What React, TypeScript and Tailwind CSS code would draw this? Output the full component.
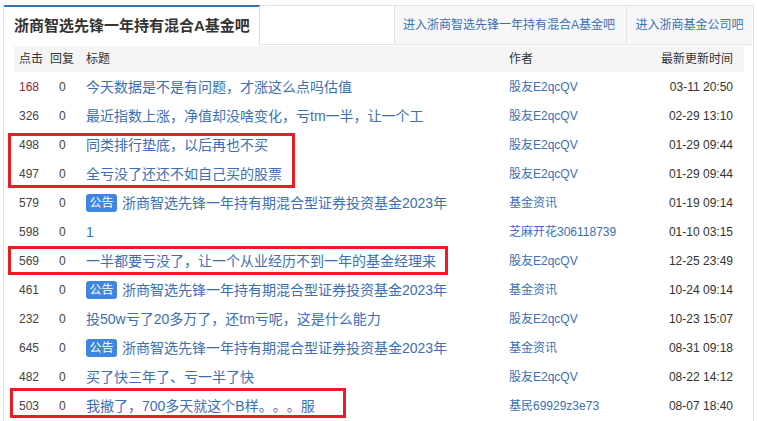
const font = { fontFamily: '"Liberation Sans", "Noto Sans CJK SC", sans-serif' };

type Row = {
  clicks: string;
  title: string;
  author: string;
  time: string;
  notice?: boolean;
  red?: boolean;
};

const rows: Row[] = [
  { clicks: "168", red: true, title: "今天数据是不是有问题，才涨这么点吗估值", author: "股友E2qcQV", time: "03-11 20:50" },
  { clicks: "326", title: "最近指数上涨，净值却没啥变化，亏tm一半，让一个工", author: "股友E2qcQV", time: "02-29 13:10" },
  { clicks: "498", title: "同类排行垫底，以后再也不买", author: "股友E2qcQV", time: "01-29 09:44" },
  { clicks: "497", title: "全亏没了还还不如自己买的股票", author: "股友E2qcQV", time: "01-29 09:44" },
  { clicks: "579", notice: true, title: "浙商智选先锋一年持有期混合型证券投资基金2023年", author: "基金资讯", time: "01-19 09:14" },
  { clicks: "598", title: "1", author: "芝麻开花306118739", time: "01-10 03:15" },
  { clicks: "569", title: "一半都要亏没了，让一个从业经历不到一年的基金经理来", author: "股友E2qcQV", time: "12-25 23:49" },
  { clicks: "461", notice: true, title: "浙商智选先锋一年持有期混合型证券投资基金2023年", author: "基金资讯", time: "10-24 09:14" },
  { clicks: "232", title: "投50w亏了20多万了，还tm亏呢，这是什么能力", author: "股友E2qcQV", time: "10-23 15:07" },
  { clicks: "645", notice: true, title: "浙商智选先锋一年持有期混合型证券投资基金2023年", author: "基金资讯", time: "08-31 09:18" },
  { clicks: "482", title: "买了快三年了、亏一半了快", author: "股友E2qcQV", time: "08-22 14:12" },
  { clicks: "503", title: "我撤了，700多天就这个B样。。。服", author: "基民69929z3e73", time: "08-07 18:40" },
];

function Highlight({ className }: { className: string }) {
  return <div className={`absolute border-[3px] border-[#ed1c24] pointer-events-none ${className}`} />;
}

export default function App() {
  return (
    <div style={font} className="relative h-[421px] w-[757px] overflow-hidden bg-white pl-[3px] pr-[3px] pt-[5px] [text-spacing-trim:space-all]">
      <div className="h-[416px] border-l border-r border-[#e4e4e4]">
        <div className="flex h-[40px] items-stretch">
          <div className="flex w-[256px] items-center border-t-2 border-r border-t-[#2e75b6] border-r-[#ddd] bg-white pl-[10px] pt-px text-[15px] font-bold text-[#333]">
            浙商智选先锋一年持有混合A基金吧
          </div>
          <div className="flex-1 border-t border-b border-[#e4e4e4] bg-white" />
          <a className="flex w-[232px] items-center justify-center border border-r-0 border-[#e4e4e4] bg-[#f7f7f9] pr-[3px] text-[12px] text-[#3b6fb6]">
            进入浙商智选先锋一年持有混合A基金吧
          </a>
          <a className="flex w-[127px] items-center justify-center border border-r-0 border-[#e4e4e4] bg-[#f7f7f9] pr-px text-[12px] text-[#3b6fb6]">
            进入浙商基金公司吧
          </a>
        </div>

        <div className="ml-[10px] mr-[9px] mt-px">
          <div className="flex h-[26px] items-center bg-[#f5f5f5] text-[12px] text-[#333]">
            <span className="w-[32px] pl-[5px]">点击</span>
            <span className="w-[40px] pl-[4px]">回复</span>
            <span className="w-[423px]">标题</span>
            <span className="flex-1">作者</span>
            <span className="pr-[11px]">最新更新时间</span>
          </div>
          {rows.map((row, i) => (
            <div key={i} className="flex h-[29px] items-center text-[12px]">
              <span className={`w-[32px] pl-[5px] ${row.red ? "text-[#8b1f3f]" : "text-[#444]"}`}>{row.clicks}</span>
              <span className="w-[40px] pl-[13px] text-[#444]">0</span>
              <span className="flex w-[423px] items-center whitespace-nowrap pt-px text-[14px] text-[#3b6fb6]">
                {row.notice && (
                  <span className="mr-[5px] flex h-[18px] w-[31px] items-center justify-center rounded-[3px] bg-[#3f86e3] text-[12px] text-white">
                    公告
                  </span>
                )}
                {row.title}
              </span>
              <span className="flex-1 whitespace-nowrap text-[#3b6fb6]">{row.author}</span>
              <span className="pr-[11px] text-[#333]">{row.time}</span>
            </div>
          ))}
        </div>
      </div>

      <Highlight className="left-[8px] top-[133px] h-[55px] w-[287px]" />
      <Highlight className="left-[8px] top-[246px] h-[29px] w-[440px]" />
      <Highlight className="left-[10px] top-[388px] h-[30px] w-[336px]" />
    </div>
  );
}
